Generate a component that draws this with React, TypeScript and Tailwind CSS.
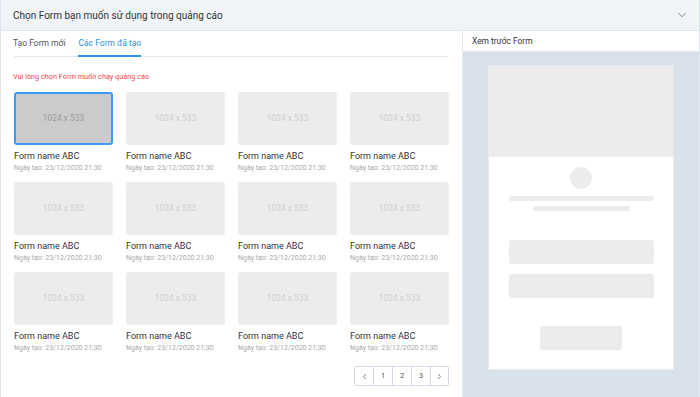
import React from 'react';
import { ChevronDown, ChevronLeft, ChevronRight } from 'lucide-react';

const FormCard = ({ selected }: { selected?: boolean }) => (
  <div className="flex flex-col">
    <div
      className={`h-[53px] rounded-[3px] flex items-center justify-center text-[8.4px] ${
        selected
          ? 'bg-[#cbcbcb] text-[#9b9b9b] border-2 border-[#3a9cf2]'
          : 'bg-[#ececec] text-[#cfcfcf]'
      }`}
    >
      1024 x 533
    </div>
    <div className="mt-[5px] text-[9px] leading-[13px] text-[#333] whitespace-nowrap">Form name ABC</div>
    <div className="text-[7px] leading-[10px] text-[#a8a8a8] whitespace-nowrap">Ngày tạo: 23/12/2020 21:30</div>
  </div>
);

const App = () => {
  const cards = Array.from({ length: 12 }, (_, i) => i);

  return (
    <div className="w-[700px] h-[397px] bg-white flex flex-col border-l border-r border-[#dfe5ee] font-['Roboto',sans-serif] overflow-hidden">
      {/* Header */}
      <div className="h-[31px] shrink-0 bg-[#f0f3f8] border-b border-[#e0e6ee] flex items-center justify-between pl-[12px] pr-[10px]">
        <span className="text-[10px] text-[#333]">Chọn Form bạn muốn sử dụng trong quảng cáo</span>
        <ChevronDown size={14} strokeWidth={1.5} className="text-[#777]" />
      </div>

      <div className="flex flex-1 min-h-0">
        {/* Left panel */}
        <div className="w-[462px] border-r border-[#e3e8ef] pl-[13px] pr-[13px]">
          <div className="flex gap-[13px] border-b border-[#e6eaf0] h-[26px] items-end text-[8.5px]">
            <div className="pb-[6px] text-[#555] -ml-[1px]">Tạo Form mới</div>
            <div className="pb-[5px] text-[#2d93e6] border-b-2 border-[#2d93e6] -mb-px">Các Form đã tạo</div>
          </div>

          <div className="mt-[14px] text-[7.3px] leading-[12px] text-[#f0474c] -ml-[1px]">
            Vui lòng chọn Form muốn chạy quảng cáo
          </div>

          <div className="mt-[9px] grid grid-cols-4 gap-x-[13px] gap-y-[9px]">
            {cards.map((i) => (
              <FormCard key={i} selected={i === 0} />
            ))}
          </div>

          <div className="mt-[13px] flex justify-end">
            <div className="flex border border-[#d3dbe6] rounded-[2px] text-[7.5px] text-[#555]">
              <div className="w-[18px] h-[18px] flex items-center justify-center">
                <ChevronLeft size={9} strokeWidth={2} />
              </div>
              <div className="w-[19px] h-[18px] flex items-center justify-center border-l border-[#d3dbe6]">1</div>
              <div className="w-[19px] h-[18px] flex items-center justify-center border-l border-[#d3dbe6]">2</div>
              <div className="w-[19px] h-[18px] flex items-center justify-center border-l border-[#d3dbe6]">3</div>
              <div className="w-[18px] h-[18px] flex items-center justify-center border-l border-[#d3dbe6]">
                <ChevronRight size={9} strokeWidth={2} />
              </div>
            </div>
          </div>
        </div>

        {/* Right panel */}
        <div className="flex-1 flex flex-col">
          <div className="h-[21px] shrink-0 flex items-center px-[9px] text-[8.4px] text-[#333] border-b border-[#e3e8ef]">
            Xem trước Form
          </div>
          <div className="flex-1 bg-[#d9e1eb] pt-[13px] pl-[25px] pr-[25px]">
            <div className="h-[305px] bg-white flex flex-col items-center border border-[#e6eaf0]">
              <div className="w-full h-[91px] bg-[#ececec]" />
              <div className="mt-[10px] w-[22px] h-[22px] rounded-full bg-[#ececec]" />
              <div className="mt-[7px] w-[145px] h-[5px] rounded-full bg-[#ececec]" />
              <div className="mt-[5px] w-[97px] h-[5px] rounded-full bg-[#ececec]" />
              <div className="mt-[29px] w-[145px] h-[24px] rounded-[3px] bg-[#ececec]" />
              <div className="mt-[10px] w-[145px] h-[24px] rounded-[3px] bg-[#ececec]" />
              <div className="mt-[28px] w-[82px] h-[24px] rounded-[3px] bg-[#ececec]" />
            </div>
          </div>
        </div>
      </div>
    </div>
  );
};

export default App;
